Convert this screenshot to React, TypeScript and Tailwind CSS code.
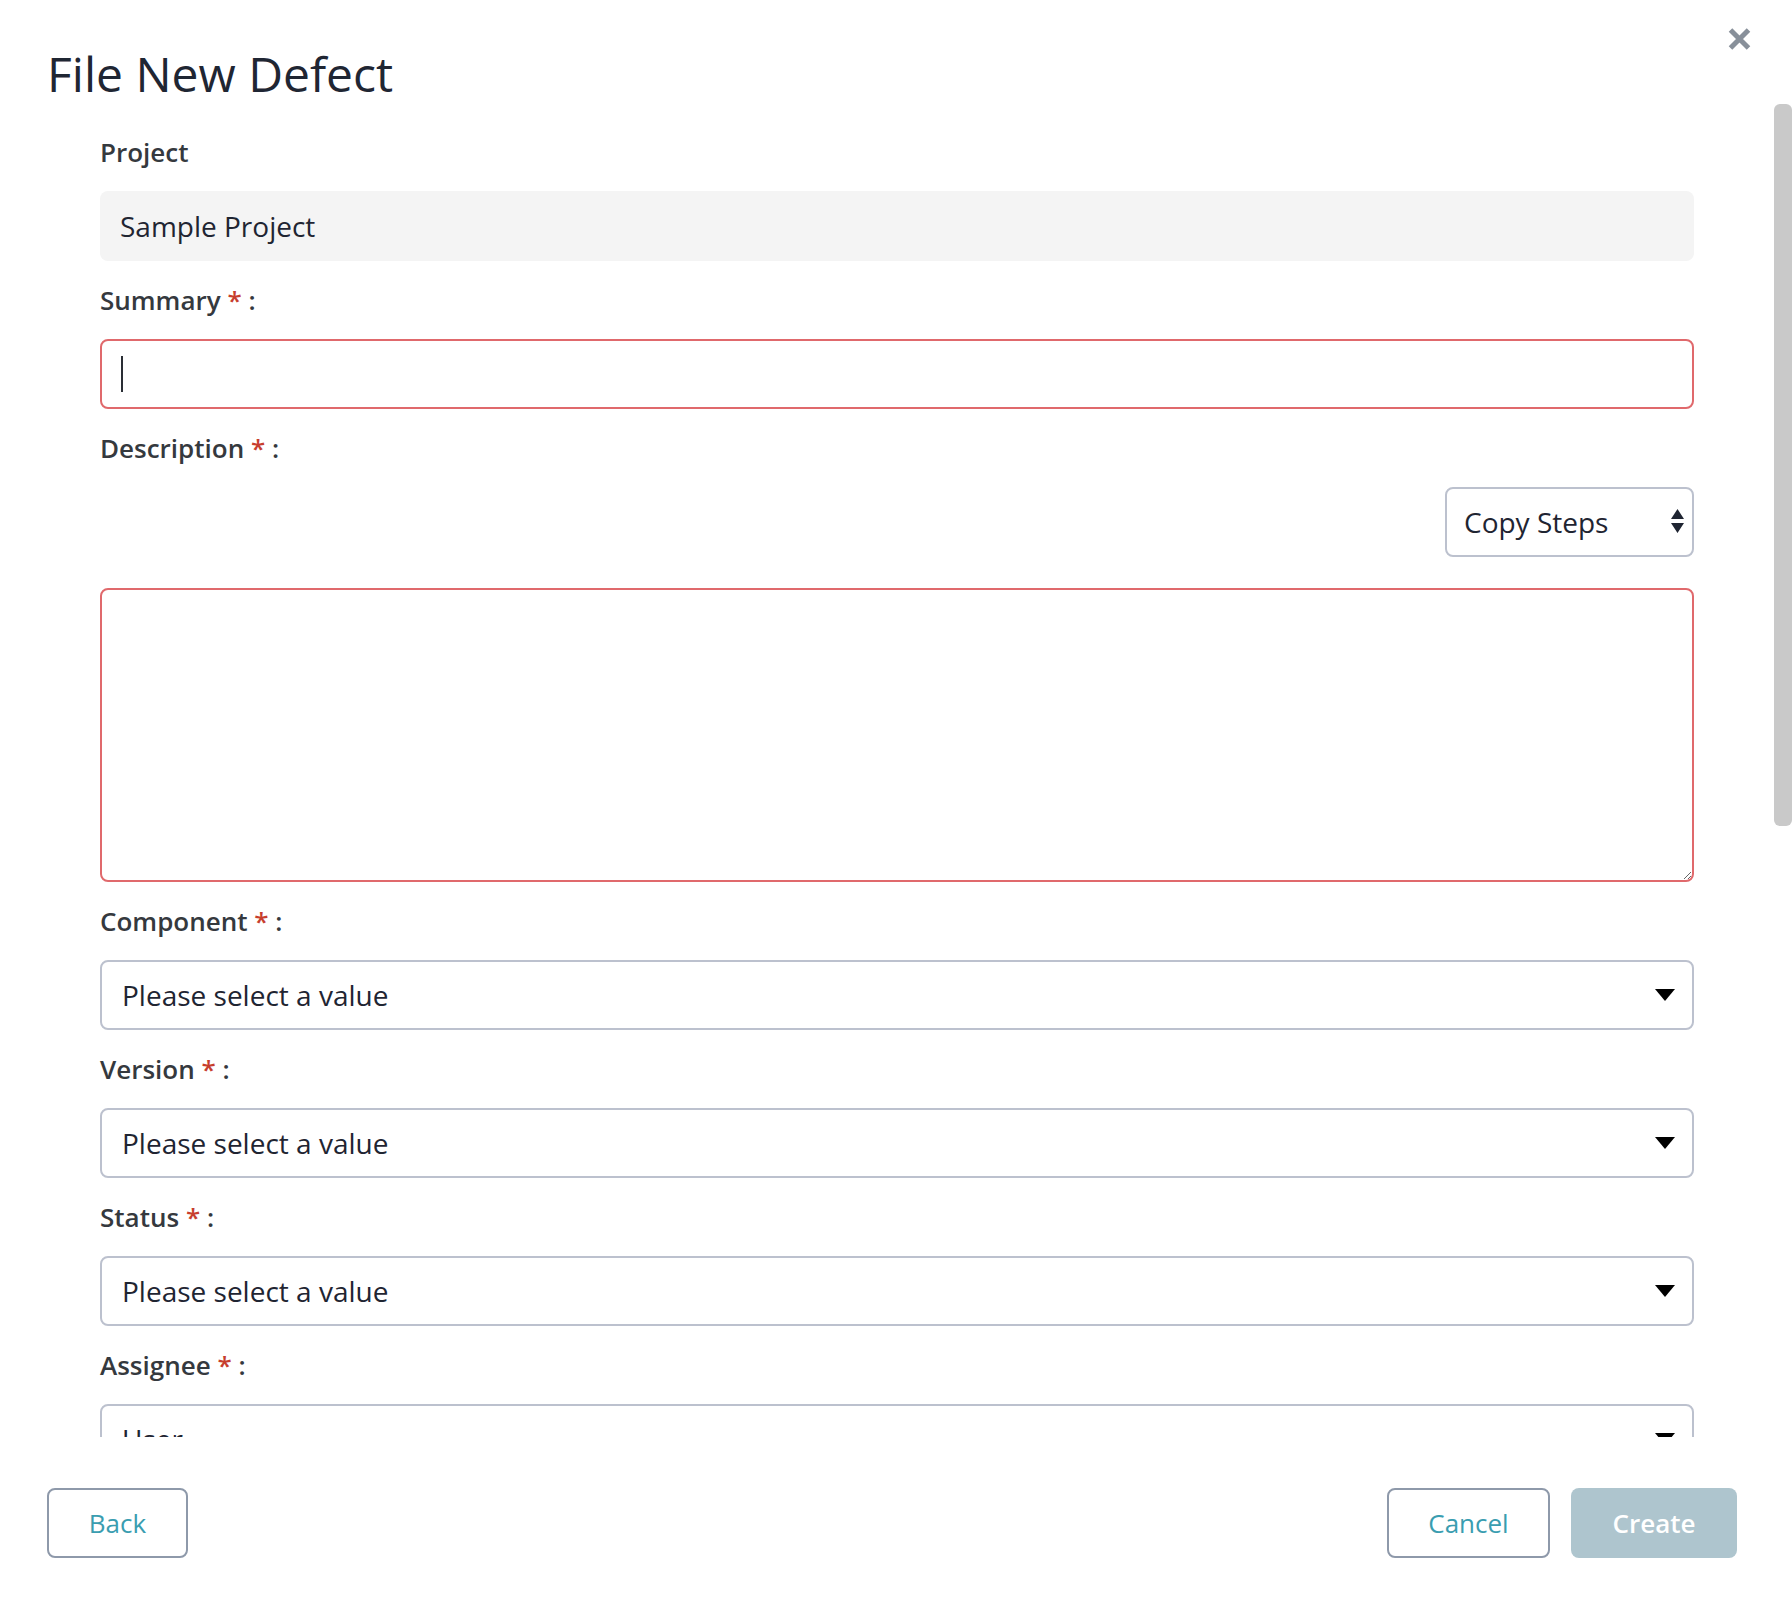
import React from "react";

const labelCls = "h-[36px] mb-[21px] text-[26px] leading-[36px] font-semibold text-[#35393e]";

function FieldLabel({ text, required }: { text: string; required?: boolean }) {
  return (
    <div className={labelCls}>
      {text}
      {required && (
        <>
          {" "}
          <span className="text-[#c73e2e]">*</span> :
        </>
      )}
    </div>
  );
}

function SelectBox({ value }: { value: string }) {
  return (
    <div className="flex h-[70px] shrink-0 items-center justify-between rounded-[8px] border-2 border-[#bcc1ce] bg-white pl-[20px] pr-[17px] text-[28px] text-[#1f2532]">
      <span>{value}</span>
      <svg width="20" height="12" viewBox="0 0 20 12" aria-hidden="true">
        <path d="M0 0H20L10 12Z" fill="#000" />
      </svg>
    </div>
  );
}

export default function App() {
  return (
    <div className="relative flex h-[1606px] w-[1792px] flex-col overflow-hidden bg-white font-['Open_Sans',sans-serif]">
      {/* header */}
      <div className="flex h-[107px] shrink-0 items-start justify-between pl-[47px] pr-[41px] pt-[26px]">
        <h1 className="mt-[14px] text-[48px] leading-[67px] font-normal text-[#1f2633]">File New Defect</h1>
        <button className="mt-[1px] flex h-[24px] w-[24px] items-center justify-center" title="Close">
          <svg width="23" height="22" viewBox="0 0 23 22" aria-hidden="true">
            <path d="M2.5 2L20.5 20M20.5 2L2.5 20" stroke="#88909a" strokeWidth="5" />
          </svg>
        </button>
      </div>

      {/* scrolling body */}
      <div className="h-[1330px] shrink-0 overflow-hidden pl-[100px] pr-[98px] pt-[27px]">
        <FieldLabel text="Project" />
        <div className="mb-[21px] flex h-[70px] items-center rounded-[8px] bg-[#f4f4f4] pl-[20px] text-[28px] text-[#1f2532]">
          Sample Project
        </div>

        <FieldLabel text="Summary" required />
        <div className="mb-[21px] flex h-[70px] items-center rounded-[8px] border-2 border-[#e0696c] pl-[19px]">
          <span className="h-[36px] w-[2px] bg-[#2a2e35]" />
        </div>

        <FieldLabel text="Description" required />
        <div className="mb-[31px] flex justify-end">
          <div className="flex h-[70px] w-[249px] items-center justify-between rounded-[8px] border-2 border-[#bcc1ce] pl-[17px] pr-[8px] text-[28px] text-[#1f2532]">
            <span>Copy Steps</span>
            <svg width="13" height="26" viewBox="0 0 13 26" aria-hidden="true">
              <path d="M6.5 0L13 10H0Z M0 14H13L6.5 24Z" fill="#1f2532" />
            </svg>
          </div>
        </div>
        <textarea className="mb-[21px] block h-[294px] w-full rounded-[8px] border-2 border-[#e0696c] bg-white outline-none" />

        <FieldLabel text="Component" required />
        <div className="mb-[21px]">
          <SelectBox value="Please select a value" />
        </div>

        <FieldLabel text="Version" required />
        <div className="mb-[21px]">
          <SelectBox value="Please select a value" />
        </div>

        <FieldLabel text="Status" required />
        <div className="mb-[21px]">
          <SelectBox value="Please select a value" />
        </div>

        <FieldLabel text="Assignee" required />
        <div className="mb-[21px]">
          <SelectBox value="User" />
        </div>
      </div>

      {/* footer */}
      <div className="flex shrink-0 items-start justify-between pl-[47px] pr-[55px] pt-[51px]">
        <button className="h-[70px] w-[141px] rounded-[8px] border-2 border-[#8e99aa] text-[26px] text-[#3a9db0]">
          Back
        </button>
        <div className="flex gap-[21px]">
          <button className="h-[70px] w-[163px] rounded-[8px] border-2 border-[#8e99aa] text-[26px] text-[#3a9db0]">
            Cancel
          </button>
          <button className="h-[70px] w-[166px] rounded-[8px] bg-[#aec5ce] text-[26px] font-semibold text-white">
            Create
          </button>
        </div>
      </div>

      {/* scrollbar thumb over the body */}
      <div className="absolute right-0 top-[104px] h-[722px] w-[18px] rounded-[6px] bg-[#c9c9c9]" />
    </div>
  );
}
